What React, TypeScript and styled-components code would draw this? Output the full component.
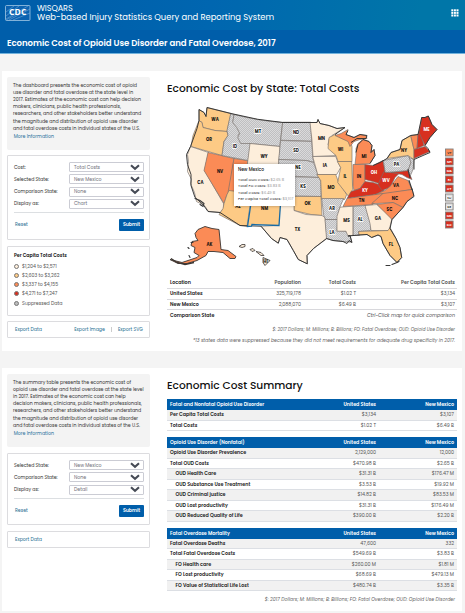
import React from "react";
import styled, { createGlobalStyle } from "styled-components";

const Global = createGlobalStyle`
  *{box-sizing:border-box}
  html,body{margin:0;background:#f4f4f4}
  body{font-family:Poppins,Inter,"Noto Sans",sans-serif;color:#333;font-size:4.7px;width:465px;height:613px;overflow:hidden}
`;
const Header = styled.header`
  height:30px;display:flex;align-items:flex-start;padding:4px 6px 0 5px;color:#fff;
  background:linear-gradient(100deg,#005eaa 10%,#0066b0 45%,#0076a8 90%);
`;
const Brand = styled.div`margin:-.5px 0 0 6px;flex:1;font-size:8.4px;line-height:9px;white-space:nowrap`;
const BrandShort = styled.div`font-size:8.1px;letter-spacing:-.08px`;
const BrandLong = styled.div``;
const GridIcon = styled.svg`margin-top:5px`;
const TitleBar = styled.div`
  height:24px;background:#005eaa;border-bottom:1px solid #71b2dc;color:#fff;
  padding-left:7px;font-size:8.55px;line-height:26px;font-weight:600;letter-spacing:-.05px;white-space:nowrap;
`;
const Panel = styled.section<{ $top: number; $h: number }>`
  margin:${p => p.$top}px 3px 0 2px;height:${p => p.$h}px;background:#fff;padding:6px 5px 0;
  display:grid;grid-template-columns:143px 290px;column-gap:17px;align-items:start;
`;
const Side = styled.aside`display:flex;flex-direction:column`;
const Intro = styled.div`
  height:73px;background:#f3f3f3;border-radius:2px;padding:4.5px 0 0 6px;
  line-height:7.2px;white-space:nowrap;color:#333;
`;
const More = styled.a`display:block;margin-top:1.5px;margin-left:.7px;color:#28719b`;
const Card = styled.div<{ $h: number; $gap?: number }>`
  height:${p => p.$h}px;margin-top:${p => p.$gap ?? 5}px;border:1px solid #dcdcdf;border-radius:1px;padding:6px 5px 0 6px;
`;
const Field = styled.label`display:grid;grid-template-columns:55px 75px;align-items:center;height:10px;margin-bottom:2.3px`;
const Select = styled.span`
  height:10px;border:1px solid #cbccd4;border-radius:1px;display:flex;align-items:center;
  justify-content:space-between;padding:0 3.5px 0 4px;color:#70707a;
`;
const Actions = styled.div`
  border-top:1px solid #dcdfe2;margin-top:3.5px;padding:5.5px 0 0 1px;display:flex;justify-content:space-between;align-items:center;color:#286f92;
`;
const Submit = styled.button`
  width:25px;height:12px;padding:0;border:0;border-radius:1px;background:#005eaa;color:#fff;
  font:600 4.7px Poppins,Inter,sans-serif;
`;
const LegendTitle = styled.div`font-weight:600;color:#111;line-height:7px;margin-top:-1px;margin-bottom:3.5px`;
const LegendRow = styled.div<{ $last?: boolean }>`
  display:flex;align-items:center;gap:3px;height:8.8px;margin-top:${p => (p.$last ? 1.2 : 0)}px;color:#555;
`;
const Dot = styled.i<{ $c: string }>`width:5px;height:5px;border-radius:50%;border:.8px solid #777;background:${p => p.$c}`;
const Exports = styled(Card)`
  display:flex;align-items:center;padding:0 6px 1px 7px;color:#286f92;gap:6px;
  & span:first-child{flex:1}
  & i{height:5px;border-left:1px solid #ccc}
`;
const H2 = styled.h2<{ $gap?: number }>`
  margin:4.500px 0 ${p => p.$gap ?? 0.5}px;font-size:10.65px;line-height:14px;font-weight:500;color:#111;white-space:nowrap;
`;
const MapWrap = styled.div`position:relative;height:182px`;
const MapSvg = styled.svg`display:block;font-family:Poppins,Inter,sans-serif`;
const Tip = styled.div`
  position:absolute;left:67px;top:68px;width:61px;height:42px;background:#fff;box-shadow:0 0 3px #0005;
  padding:3px 0 0 4px;font-size:3.8px;line-height:6.3px;color:#999;white-space:nowrap;
`;
const TipTitle = styled.div`font-size:4.4px;color:#111;font-weight:500;line-height:6px;margin-bottom:4px`;
const Tag = styled.b`color:#555;font-weight:500`;
const PlaceRow = styled.div<{ $head?: boolean; $last?: boolean }>`
  display:grid;grid-template-columns:68px 63px 55px 99px;height:10.8px;align-items:center;padding:0 2px 0 3px;
  border-bottom:${p => (p.$last ? "0" : "1px solid #d8d8dc")};text-align:right;color:#555;
  font-weight:${p => (p.$head ? 600 : 400)};font-size:4.8px;white-space:nowrap;
  & > :first-child{text-align:left;font-weight:600;color:#222}
  & > em{grid-column:2 / 5}
`;
const Note = styled.div<{ $top: number; $small?: boolean }>`
  margin:${p => p.$top}px 2px 0 0;text-align:right;font-style:italic;line-height:7px;color:#666;white-space:nowrap;
  font-size:${p => (p.$small ? 4.5 : 4.7)}px;
`;
const Group = styled.div`margin-bottom:6px`;
const Row = styled.div<{ $head?: boolean; $shade?: boolean; $sub?: boolean }>`
  display:grid;grid-template-columns:1fr 70px 78px;align-items:center;text-align:right;
  height:${p => (p.$head ? 11 : 10.5)}px;padding:0 3px;white-space:nowrap;font-size:4.8px;
  background:${p => (p.$head ? "#005eaa" : p.$shade ? "#f1f1f1" : "#fff")};
  color:${p => (p.$head ? "#fff" : "#555")};font-weight:${p => (p.$head ? 600 : 400)};
  border-bottom:${p => (p.$head ? "0" : "1px solid #dcdfe4")};
  & > :first-child{text-align:left;font-weight:600;color:${p => (p.$head ? "#fff" : "#222")};padding-left:${p => (p.$sub ? 5.5 : 0)}px}
`;

const CREAM = "#fdeedb", TAN = "#fdca85", ORANGE = "#fb8b56", RED = "#d7301f", GRAY = "url(#dots)";

const states: [string, string][] = [
  [TAN, "M199 109l5 3 2 4 1-9 24 6-4 18-12-1-8 -2-4-1-1-5-3-2z"],
  [TAN, "M199 120l3 2 1 5 4 1 8 2 12 1 1 4-4 6-2 14-31-9 2-11z"],
  [CREAM, "M190.5 146l18 6-4 18 19 33 0 5-3 4-12-1-4-6-8-4-2-9-4-9 1-4-4-8 1-10-1-7z"],
  [ORANGE, "M208 152l26 6-5 35-2 1-3 9-20-33z"],
  [ORANGE, "M234 158l14 2-1 6 10 1-2 28-27-3z"],
  [GRAY, "M230.700 113l3.300 1-1 7 5 6 2 5-2 3 3 5 10 3-3 17-26-5 2-14 4-6-1-5z"],
  [GRAY, "M234 114c16 4 33 7 48.700 8l-3 24-29-3-10 0-3-6 2-4-3-6-4-5z"],
  [CREAM, "M250 143l30 3-2 31-32-3z"],
  [GRAY, "M246 174l49 4-2 27-43-2z"],
  [GRAY, "M282.700 121.700l28 0 1 19-31-1z"],
  [GRAY, "M280.700 140l31 1 1 15 1 6-7-2-28-1z"],
  [GRAY, "M278.500 159l28 1 7 2 5 13 1 2-40-2z"],
  [GRAY, "M281 176l38 1 2 4 0 15-40-1z"],
  [TAN, "M229 190l24 3-3 12-3 21-7-1-21-11 4-6 1-5 3-9z"],
  [TAN, "M281 196l40 0 1 19-11-1-17-4 0-11-14-1z"],
  [CREAM, "M280 205L294 205 294 210 306 214 322 215 325 217 327 238 313.500 248 307 255 307.300 263.300 298.300 259 293.300 250 287 239 280 237 278.300 242.700 271.500 238 261 225.700 278.500 225z"],
  [CREAM, "M310 122l7 0 1-3 2 4 9 2 8 3 8-1-13 8-3 4-1 5 8 11-23 1-1-16z"],
  [CREAM, "M312.700 156l23 0 2 5 3 6-4 7-19 0z"],
  [TAN, "M316.700 174l19 0 3 8 3 4 5 8-2 5-23 0-1-19z"],
  [GRAY, "M321.700 198l22 0-4 9-2 12-12 0-2-4z"],
  [GRAY, "M325 219L337.700 219 337 230 346.700 231 350 235 351.700 241.700 343 241 333 240 326.500 238z"],
  [CREAM, "M340 206.700l13-1 0 29-5 1-2-5-9 0 0-15z"],
  [GRAY, "M353.300 206l12-1 6 20-1 5-12 1 1 4-6 0z"],
  [CREAM, "M365 205l12-1 15 14-3 12-18 0-1-7z"],
  [TAN, "M358.500 231L388 230 390 227 396 238 400 247 401.700 257 397 262 390 255 383 243 381 236 378 234.500 371.700 237 367 234 359 234.500z"],
  [TAN, "M329 137l6-3 7 4 8 2 2 6 0 15-14 0-2-6-8-7z"],
  [ORANGE, "M335 135l6-2 7-4-2 5 8 3 6-3 6 1 1 3-7 1-6 2-4 5-2-5z"],
  [ORANGE, "M358 143l5-4 6 2 3 4-1 7 3-3 1 6-5 8-15 1 1-9 0-7z"],
  [TAN, "M337.300 161l14.400 0 1 28-4 7-4-5-7-9 3-15z"],
  [ORANGE, "M353 164l12 0 0 17-5 7-6 2-1-5z"],
  [RED, "M365 164l8 1 10-5 2 11-6 12-6-2-8-2z"],
  [RED, "M347 198l4-7 9-3 5-7 8 1 6 2 5 6-8 4z"],
  [RED, "M384 171l7 1 9 0 -5 5-5 10-8 3-4-6z"],
  [ORANGE, "M375 194l10-4 6-5 7-9 10 4 4 9-24 4z"],
  [RED, "M391 172l17-2 4 9-5-2-5-3z"],
  [ORANGE, "M347 198l36-5-10 11-30 2z"],
  [ORANGE, "M383 193L412 189 414 195 407 201 403 207 393 202 377 203 371.700 203z"],
  [ORANGE, "M377 204l16-2 10 5-11 12z"],
  [GRAY, "M383.300 160l25-5 3 6-3 9-23 2z"],
  [GRAY, "M409 157l5 2-1 10-3 7-2-6 3-8z"],
  [TAN, "M387 158L391 152 400 149 402 140 410.700 135 414 149 414 159 408 155z"],
  [ORANGE, "M410.700 135l7.300-1-1 14-3 1z"],
  [RED, "M418 134l2-5 4 16-7 3z"],
  [RED, "M414 149l11-3 5 5-7 3-9 4z"],
  [RED, "M419 132L421.700 117 425 117 428.300 115.500 432 124 437 129 430 137 425 145z"],
];
const alaska = "M195 233l3-4 7-3 7 2 7 1 2 20 7 1 8 6-1 2-5 0-7-6-9-1-6 0-2 4-9 5-10 3-9 0-8-4 12 3 15-5 2-2-5-3 1-5-4-2 1-4 6-1-2-3z";
const hawaii = "M239 246l3-2 3 0 0 2-3 1zM250 249l3-1 2 2-3 1zM256 251l5 1 3 3-3 0zM263 257l7 3-5 5-2-3z";
const coasts = [
  "M190.500 146L186.500 154 187.500 164 191 174 191 185 195 197 203 204 208 211 220 212 240 225 261 225.700 271.500 238 278.300 242.700 280 237 287 239 293.300 250 298.300 259 307.300 263.300 307 255 313.500 248 326.500 238 333 240 343 241 347 243 349 240 352 242 350 235 348 235.500 359 234.500 367 234 371.700 237 378 234.500 381 236 383 243 390 255 397 262 401.700 257 400 247 396 238 390 228 392 219 403 207 407 201 414 196 412 188",
  "M190.500 146L197 128 199 120 199 109 204 112 206 116 207 107 231 113Q258 120 283 122L317 122 318 119 320 123 329 125 337 128 345 127 335 134",
  "M414 169L414 159 423 155 430 152 428 148 425 145 430 137 437 129 432 124 428.300 115.500 425 117 421.700 117 418 134 410.700 135 402 140 400 149 391 152 387 158 380 162 373 165",
  "M358 144L363 139 369 141 372 145 371 152 374 149 375 155 370 163M356 152L358 144M351 142L357 138 366 138 367 135 360 134 354 137 346 134 348 130",
];
const islands = "M191 242l2 0M188 247l1 1M189 255l1 2M195 198l5 2 4 3-1 3-3-2M386 265l4 0M410 177l-2-8M409 180l3 9M392 264l5-2 2-1";
const labels: [string, number, number][] = [
  ["WA",215,120.500],["OR",209,140.500],["CA",200.500,183],["NV",220,172],["ID",235,147.500],["MT",258,132],["WY",264,157],["ND",296,133],["SD",296,151],["NE",298,168.500],["KS",303,187.500],["AZ",238,207],["NM",264.500,209.500],["OK",307.500,204.500],["TX",297.500,230],["MN",321.500,139.500],["IA",325,166],["MO",331,188],["AR",332,209],["LA",332,233],["MS",346.500,221.500],["AL",360,220],["GA",378,219],["FL",391,245],["WI",340.500,150],["MI",364,157],["IL",345,177],["IN",359,177],["OH",374,173],["KY",365,191.500],["WV",386,181],["VA",396,186],["TN",361.500,201],["NC",395,199.500],["SC",389.500,210],["PA",396.500,165],["NY",404,151],["ME",426.500,130],["AK",209.500,245.500],["HI",265.500,262],
];
const white = ["OH", "KY", "WV", "ME"];
const gray = ["ID", "MT", "ND", "SD", "NE", "KS", "AR", "LA", "AL", "PA"];
const badges: [string, string][] = [["VT",ORANGE],["NH",RED],["MA",RED],["RI",RED],["CT",RED],["NJ","#ddd"],["DE","#ddd"],["MD",RED],["DC",RED]];

function UsMap() {
  return (
    <MapSvg width="290" height="182" viewBox="167 95.500 290 182">
      <defs>
        <pattern id="dots" width="2" height="2" patternUnits="userSpaceOnUse" y=".5">
          <rect width="2" height="2" fill="#dadadb" /><path d="M0 0h1v1H0zM1 1h1v1H1z" fill="#bfbfc1" />
        </pattern>
      </defs>
      {states.map(([c, d], i) => <path key={i} d={d} fill={c} stroke="#77706a" strokeWidth=".65" strokeLinejoin="round" />)}
      {coasts.map(d => <path key={d} d={d} fill="none" stroke="#333" strokeWidth=".95" strokeLinejoin="round" />)}
      <path d={alaska} fill={ORANGE} stroke="#3a3532" strokeWidth=".9" strokeLinejoin="round" />
      <path d="M171 258l6 4 8 2 9-2" fill="none" stroke="#3a3532" strokeWidth="1.300" />
      <path d={hawaii} fill={CREAM} stroke="#3a3532" strokeWidth=".8" />
      <path d={islands} fill="none" stroke="#383838" strokeWidth="1.100" strokeLinecap="round" />
      <path d="M252 196l-4.500 30 4-.3.500-1.700 27 1 2-29z" fill={TAN} stroke="#176ba5" strokeWidth="1.300" />
      {labels.map(([t, x, y]) => (
        <text key={t} x={x} y={y} textAnchor="middle" fontSize="4.200" fontWeight="700" fill={white.includes(t) ? "#fff" : "#111"}
          stroke={gray.includes(t) ? "#fff" : "none"} strokeWidth="1.500" paintOrder="stroke">{t}</text>
      ))}
      {badges.map(([t, c], i) => (
        <g key={t}>
          <rect x="445.500" y={148.500 + i * 9} width="7.600" height="7" fill={c} stroke="#85817f" strokeWidth=".9" />
          <text x="449.300" y={153.300 + i * 9} textAnchor="middle" fontSize="3.300" fontWeight="600" fill={i === 0 || c === "#ddd" ? "#333" : "#fff"}
            stroke={c === "#ddd" ? "#fff" : "none"} strokeWidth="1.200" paintOrder="stroke">{t}</text>
        </g>
      ))}
    </MapSvg>
  );
}

function FieldRow({ name, value }: { name: string; value: string }) {
  return (
    <Field>{name}
      <Select>{value}
        <svg width="10" height="7" viewBox="0 0 10 7"><path d="M1 1.200L5 4.800 9 1.200" fill="none" stroke="#454a55" strokeWidth="2.100" /></svg>
      </Select>
    </Field>
  );
}
const IntroText = ({ lines }: { lines: string[] }) => (
  <Intro>{lines.map(l => <div key={l}>{l}</div>)}<More>More Information</More></Intro>
);
type Line = [string, string, string, boolean?];
function CostGroup({ title, rows }: { title: string; rows: Line[] }) {
  return (
    <Group>
      <Row $head><span>{title}</span><span>United States</span><span>New Mexico</span></Row>
      {rows.map((r, i) => <Row key={r[0]} $shade={i % 2 === 0} $sub={r[3]}><span>{r[0]}</span><span>{r[1]}</span><span>{r[2]}</span></Row>)}
    </Group>
  );
}
const legend: [string, string][] = [[CREAM,"$1,204 to $2,571"],[TAN,"$2,603 to $3,262"],[ORANGE,"$3,337 to $4,155"],[RED,"$4,271 to $7,247"],["#bbb","Suppressed Data"]];

export default function App() {
  return (
    <>
      <Global />
      <Header>
        <svg width="26" height="17" viewBox="0 0 26 17">
          <rect x=".5" y="1.500" width="24.500" height="15" rx="1" fill="#0b62b0" stroke="#b8d5ed" strokeWidth=".7" />
          <path d="M1 15L23 2M1 12L14 2M4 16L25 5M8 16L25 9M1 8L9 2M1 16L12 10" stroke="#8dbde3" strokeWidth=".45" />
          <text x="12.800" y="11" textAnchor="middle" fill="#fff" fontFamily="Open Sans, sans-serif" fontWeight="700" fontSize="8.500" letterSpacing=".2">CDC</text>
        </svg>
        <Brand><BrandShort>WISQARS</BrandShort><BrandLong>Web-based Injury Statistics Query and Reporting System</BrandLong></Brand>
        <GridIcon width="8" height="8" viewBox="0 0 8 8" fill="#fff">
          {[0, 1, 2].map(r => [0, 1, 2].map(c => <rect key={`${r}${c}`} x={.3 + c * 2.600} y={.3 + r * 2.600} width="2" height="2" />))}
        </GridIcon>
      </Header>
      <TitleBar>Economic Cost of Opioid Use Disorder and Fatal Overdose, 2017</TitleBar>
      <Panel $top={17} $h={280}>
        <Side>
          <IntroText lines={["The dashboard presents the economic cost of opioid","use disorder and fatal overdose at the state level in","2017. Estimates of the economic cost can help decision","makers, clinicians, public health professionals,","researchers, and other stakeholders better understand","the magnitude and distribution of opioid use disorder","and fatal overdose costs in individual states of the U.S."]} />
          <Card $h={85}>
            <FieldRow name="Cost:" value="Total Costs" />
            <FieldRow name="Selected State:" value="New Mexico" />
            <FieldRow name="Comparison State:" value="None" />
            <FieldRow name="Display as:" value="Chart" />
            <Actions><span>Reset</span><Submit>Submit</Submit></Actions>
          </Card>
          <Card $h={70} $gap={6}>
            <LegendTitle>Per Capita Total Costs</LegendTitle>
            {legend.map(([c, t], i) => <LegendRow key={t} $last={i === 4}><Dot $c={c} />{t}</LegendRow>)}
          </Card>
          <Exports $h={17}><span>Export Data</span><span>Export Image</span><i /><span>Export SVG</span></Exports>
        </Side>
        <main>
          <H2>Economic Cost by State: Total Costs</H2>
          <MapWrap>
            <UsMap />
            <Tip>
              <TipTitle>New Mexico</TipTitle>
              <div><Tag>Total OUD Costs:</Tag> $2.65 B</div>
              <div><Tag>Total FO Costs:</Tag> $3.83 B</div>
              <div><Tag>Total Costs:</Tag> $6.49 B</div>
              <div><Tag>Per Capita Total Costs:</Tag> $3,107</div>
            </Tip>
          </MapWrap>
          <PlaceRow $head><span>Location</span><span>Population</span><span>Total Costs</span><span>Per Capita Total Costs</span></PlaceRow>
          <PlaceRow><span>United States</span><span>325,719,178</span><span>$1.02 T</span><span>$3,134</span></PlaceRow>
          <PlaceRow><span>New Mexico</span><span>2,088,070</span><span>$6.49 B</span><span>$3,107</span></PlaceRow>
          <PlaceRow $last><span>Comparison State</span><em>Ctrl-Click map for quick comparison</em></PlaceRow>
          <Note $top={5} $small>$: 2017 Dollars; M: Millions; B: Billions; FO: Fatal Overdose; OUD: Opioid Use Disorder</Note>
          <Note $top={4}>*13 states data were suppressed because they did not meet requirements for adequate drug specificity in 2017.</Note>
        </main>
      </Panel>
      <Panel $top={17} $h={243}>
        <Side>
          <IntroText lines={["The summary table presents the economic cost of","opioid use disorder and fatal overdose at the state level","in 2017. Estimates of the economic cost can help","decision makers, clinicians, public health professionals,","researchers, and other stakeholders better understand","the magnitude and distribution of opioid use disorder","and fatal overdose costs in individual states of the U.S."]} />
          <Card $h={72} $gap={6}>
            <FieldRow name="Selected State:" value="New Mexico" />
            <FieldRow name="Comparison State:" value="None" />
            <FieldRow name="Display as:" value="Detail" />
            <Actions><span>Reset</span><Submit>Submit</Submit></Actions>
          </Card>
          <Exports $h={17} $gap={6}><span>Export Data</span></Exports>
        </Side>
        <main>
          <H2 $gap={6.5}>Economic Cost Summary</H2>
          <CostGroup title="Fatal and Nonfatal Opioid Use Disorder" rows={[["Per Capita Total Costs","$3,134","$3,107"],["Total Costs","$1.02 T","$6.49 B"]]} />
          <CostGroup title="Opioid Use Disorder (Nonfatal)" rows={[["Opioid Use Disorder Prevalence","2,129,000","12,000"],["Total OUD Costs","$470.98 B","$2.65 B"],["OUD Health Care","$31.31 B","$176.47 M",true],["OUD Substance Use Treatment","$3.53 B","$19.92 M",true],["OUD Criminal justice","$14.82 B","$83.53 M",true],["OUD Lost productivity","$31.31 B","$176.49 M",true],["OUD Reduced Quality of Life","$390.00 B","$2.20 B",true]]} />
          <CostGroup title="Fatal Overdose Mortality" rows={[["Fatal Overdose Deaths","47,600","332"],["Total Fatal Overdose Costs","$549.69 B","$3.83 B"],["FO Health care","$260.00 M","$1.81 M",true],["FO Lost productivity","$68.69 B","$479.13 M",true],["FO Value of Statistical Life Lost","$480.74 B","$3.35 B",true]]} />
          <Note $top={-1}>$: 2017 Dollars; M: Millions; B: Billions; FO: Fatal Overdose; OUD: Opioid Use Disorder</Note>
        </main>
      </Panel>
    </>
  );
}
